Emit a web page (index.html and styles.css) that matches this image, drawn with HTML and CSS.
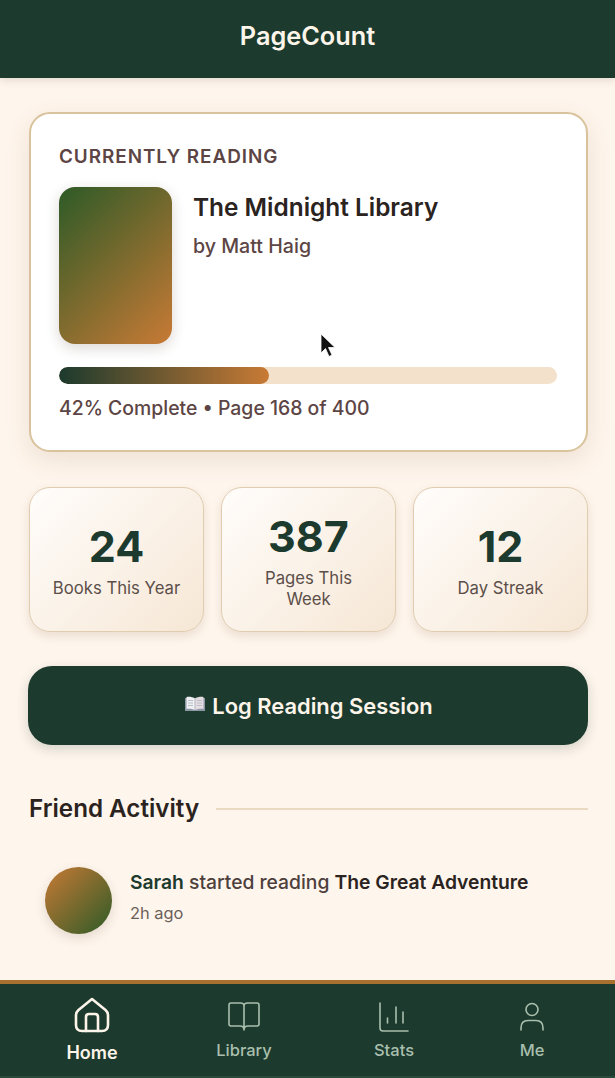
FILE: index.html
```html
<!DOCTYPE html>
<html lang="en">
<head>
    <meta charset="UTF-8">
    <title>PageCount</title>
    <link rel="stylesheet" href="styles.css">
</head>
<body>

<div class="app">
    <header class="top-bar">PageCount</header>

    <main class="content">
        <section class="reading-card">
            <h2 class="card-label">CURRENTLY READING</h2>
            <div class="book-row">
                <div class="book-cover"></div>
                <div class="book-info">
                    <h3 class="book-title">The Midnight Library</h3>
                    <p class="book-author">by Matt Haig</p>
                </div>
            </div>
            <div class="progress-track">
                <div class="progress-fill"></div>
            </div>
            <p class="progress-text">42% Complete • Page 168 of 400</p>
        </section>

        <section class="stats">
            <div class="stat-card">
                <div class="stat-number">24</div>
                <div class="stat-label">Books This Year</div>
            </div>
            <div class="stat-card">
                <div class="stat-number">387</div>
                <div class="stat-label">Pages This Week</div>
            </div>
            <div class="stat-card">
                <div class="stat-number">12</div>
                <div class="stat-label">Day Streak</div>
            </div>
        </section>

        <button class="log-button" type="button">
            <svg class="log-icon" viewBox="0 0 20 16" width="20" height="16">
                <path d="M0 2h20v13H0z" fill="#8d97a6"/>
                <path d="M1.5 1C4.5.5 7.5 1 9.7 2.3V14C7.5 13 4.5 12.6 1.5 13z" fill="#eef0f3"/>
                <path d="M18.5 1c-3-.5-6 0-8.2 1.3V14c2.2-1 5.2-1.4 8.200-1z" fill="#e6dde2"/>
                <path d="M3 4.500h5M3 7h5M3 9.500h5M12 4.500h5M12 7h5M12 9.500h5" stroke="#b9bec8" stroke-width="1"/>
            </svg>
            Log Reading Session
        </button>

        <div class="section-head">
            <h2 class="section-title">Friend Activity</h2>
            <div class="section-line"></div>
        </div>

        <div class="activity">
            <div class="avatar"></div>
            <div class="activity-body">
                <p class="activity-text"><span class="friend-name">Sarah</span> started reading <strong>The Great Adventure</strong></p>
                <p class="activity-time">2h ago</p>
            </div>
        </div>
    </main>

    <nav class="bottom-nav">
        <a class="nav-item active">
            <svg class="nav-icon" viewBox="0 0 36 36" width="36" height="36">
                <path d="M18 2 4.500 13C2.800 14.500 2 16 2 18v10c0 4 2 6 6 6h20c4 0 6-2 6-6V18c0-2-.8-3.500-2.500-5z"/>
                <path d="M12 34V20c0-2 1-3 3-3h6c2 0 3 1 3 3v14"/>
            </svg>
            <span>Home</span>
        </a>
        <a class="nav-item">
            <svg class="nav-icon" viewBox="0 0 36 36" width="36" height="36">
                <path d="M18 9c0-2-1.500-3-3.500-3H5C3.800 6 3 6.800 3 8v19c0 1.200.8 2 2 2h9c2 0 4 1 4 4 0-3 2-4 4-4h9c1.200 0 2-.8 2-2V8c0-1.200-.8-2-2-2h-9.500C19.500 6 18 7 18 9zm0 0v24"/>
            </svg>
            <span>Library</span>
        </a>
        <a class="nav-item">
            <svg class="nav-icon" viewBox="0 0 36 36" width="36" height="36">
                <path d="M4 6v25c0 2 1 3 3 3h25"/>
                <path d="M11.500 21v5M20 10v16M27 15v11"/>
            </svg>
            <span>Stats</span>
        </a>
        <a class="nav-item">
            <svg class="nav-icon" viewBox="0 0 36 36" width="36" height="36">
                <circle cx="18" cy="12.500" r="6"/>
                <path d="M7 33v-2c0-5 3-7.500 7-7.500h8c4 0 7 2.500 7 7.500v2"/>
            </svg>
            <span>Me</span>
        </a>
    </nav>

    <svg class="cursor" viewBox="0 0 16 26" width="16" height="26">
        <path d="M1 1v19l4.500-4.500 3.500 8 3-1.500-3.500-7.500H15z" fill="#111" stroke="#fff" stroke-width=".8"/>
    </svg>
</div>

</body>
</html>
```

FILE: styles.css
```css
* {
    box-sizing: border-box;
}

body {
    margin: 0;
    background-color: #fef5ec;
    font-family: "Inter", "Liberation Sans", sans-serif;
    color: #2a2320;
}

h2,
h3,
p {
    margin: 0;
}

.app {
    position: relative;
    width: 615px;
    height: 1078px;
    overflow: hidden;
    display: flex;
    flex-direction: column;
}

.top-bar {
    height: 78px;
    flex: none;
    display: flex;
    align-items: center;
    justify-content: center;
    padding-bottom: 8px;
    background-color: #1c3a2d;
    color: #fdf4ea;
    font-size: 25.300px;
    font-weight: 600;
    box-shadow: 0 2px 8px rgba(60, 50, 30, 0.15);
}

.content {
    flex: 1;
    padding: 34px 27px 0 29px;
}

/* currently reading */

.reading-card {
    height: 340px;
    padding: 32px 29px 0 28px;
    background-color: #fff;
    border: 2px solid #d9c39c;
    border-radius: 21px;
    box-shadow: 0 8px 24px rgba(120, 80, 40, 0.12);
}

.card-label {
    font-size: 18.900px;
    line-height: 22px;
    font-weight: 600;
    letter-spacing: 0.95px;
    color: #5c4544;
}

.book-row {
    display: flex;
    gap: 21px;
    margin-top: 19px;
}

.book-cover {
    width: 113px;
    height: 157px;
    border-radius: 16px;
    background: linear-gradient(135deg, #2d5a27, #c87a35);
    box-shadow: 0 4px 14px rgba(60, 40, 20, 0.18);
}

.book-title {
    margin-top: 5px;
    font-size: 24.400px;
    line-height: 30px;
    font-weight: 600;
    color: #2a2320;
}

.book-author {
    margin-top: 13px;
    font-size: 19.600px;
    line-height: 22px;
    font-weight: 500;
    color: #5c4544;
}

.progress-track {
    height: 17px;
    margin-top: 23px;
    border-radius: 9px;
    background-color: #f3e1cb;
    overflow: hidden;
}

.progress-fill {
    width: 210px;
    height: 100%;
    border-radius: 9px;
    background: linear-gradient(90deg, #1c3a2d, #c87a35);
}

.progress-text {
    margin-top: 13px;
    font-size: 19.400px;
    line-height: 22px;
    font-weight: 500;
    color: #5c4544;
}

/* stats */

.stats {
    display: grid;
    grid-template-columns: repeat(3, 175px);
    gap: 17px;
    margin-top: 35px;
}

.stat-card {
    height: 145px;
    display: flex;
    flex-direction: column;
    align-items: center;
    justify-content: center;
    padding: 0 20px;
    text-align: center;
    background: linear-gradient(135deg, #fffdfb 0%, #f6e7d5 100%);
    border: 1.5px solid #e0cdb0;
    border-radius: 21px;
    box-shadow: 0 4px 10px rgba(120, 80, 40, 0.14);
}

.stat-number {
    font-size: 43px;
    line-height: 52px;
    font-weight: 700;
    color: #1c3a2d;
}

.stat-label {
    margin-top: 6px;
    font-size: 16.700px;
    line-height: 21px;
    color: #5c4f4a;
}

/* button */

.log-button {
    width: 560px;
    height: 79px;
    margin: 34px 0 0 -1px;
    padding-left: 8px;
    display: flex;
    align-items: center;
    justify-content: center;
    gap: 7px;
    border: 0;
    border-radius: 24px;
    background-color: #1c3a2d;
    color: #fdf4ea;
    font-family: inherit;
    font-size: 21.900px;
    font-weight: 600;
    box-shadow: 0 4px 12px rgba(28, 58, 45, 0.18);
}

.log-icon {
    margin-top: -3px;
}

/* friend activity */

.section-head {
    display: flex;
    align-items: center;
    gap: 17px;
    width: 559px;
    margin-top: 49px;
}

.section-title {
    font-size: 24.200px;
    line-height: 30px;
    font-weight: 600;
    color: #2a2320;
}

.section-line {
    flex: 1;
    height: 2px;
    background-color: #e8d9c0;
}

.activity {
    display: flex;
    align-items: center;
    gap: 18px;
    margin-top: 43px;
    padding-left: 16px;
}

.avatar {
    width: 67px;
    height: 67px;
    border-radius: 50%;
    background: linear-gradient(135deg, #c87a35, #2d5a27);
    box-shadow: 0 4px 12px rgba(60, 40, 20, 0.14);
}

.activity-body {
    margin-bottom: 8px;
}

.activity-text {
    font-size: 19.270px;
    line-height: 22px;
    font-weight: 500;
    color: #4d403c;
}

.activity-text strong {
    font-weight: 600;
    color: #2a2320;
}

.friend-name {
    font-weight: 600;
    color: #1c3a2d;
}

.activity-time {
    margin-top: 10px;
    font-size: 16.400px;
    line-height: 20px;
    color: #6b5f5a;
}

/* bottom nav */

.bottom-nav {
    height: 98px;
    flex: none;
    display: grid;
    grid-template-columns: 168px 136px 164px 112px;
    padding: 13px 0 0 8px;
    background-color: #1c3a2d;
    border-top: 4px solid #a8702e;
    border-bottom: 2px solid #2a4a3b;
}

.nav-item {
    display: flex;
    flex-direction: column;
    align-items: center;
    color: #a9bfae;
    font-size: 16.500px;
    line-height: 20px;
    font-weight: 500;
}

.nav-item span {
    margin-top: 7px;
}

.nav-item.active {
    color: #fdf4ea;
    font-size: 18px;
    font-weight: 600;
}

.nav-item.active span {
    margin-top: 10px;
}

.nav-icon {
    fill: none;
    stroke: currentColor;
    stroke-width: 1.600;
    stroke-linecap: round;
    stroke-linejoin: round;
}

.active .nav-icon {
    stroke-width: 2.600;
}

.cursor {
    position: absolute;
    left: 320px;
    top: 333px;
}
```
